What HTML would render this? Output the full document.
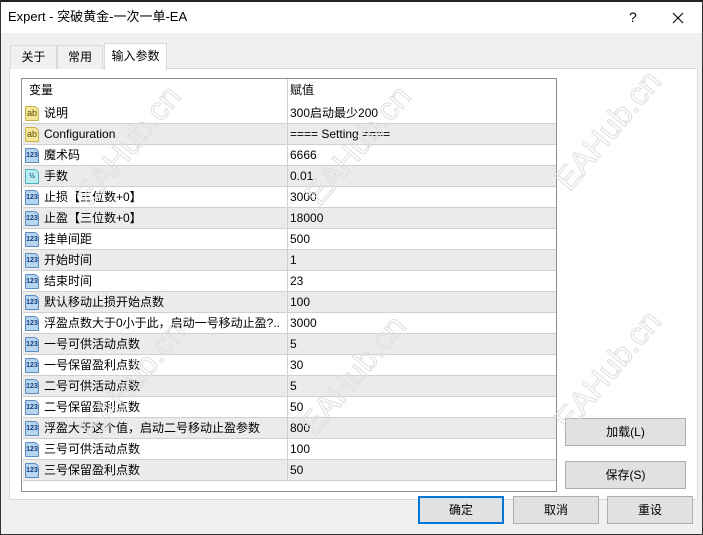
<!DOCTYPE html>
<html><head><meta charset="utf-8"><style>
*{margin:0;padding:0;box-sizing:border-box}
body{width:703px;height:535px;overflow:hidden;background:#f0f0f0;font-family:"Liberation Sans","Noto Sans CJK SC",sans-serif;font-size:12px;color:#000;position:relative}
.win{position:absolute;left:0;top:0;width:703px;height:535px;border:1px solid #333;border-top:2px solid #222;background:#f0f0f0}
.title{position:absolute;left:0;top:0;width:701px;height:31px;background:#fff}
.title .t{position:absolute;left:7px;top:6px;font-size:13px;line-height:18px}
.abs{position:absolute}
.tab{position:absolute;top:43px;height:24px;border:1px solid #d9d9d9;border-bottom:none;background:#f0f0f0;line-height:22px;text-align:center;font-size:12px}
.panel{position:absolute;left:8px;top:66px;width:689px;height:432px;background:#fff;border:1px solid #d9d9d9}
.grid{position:absolute;left:20px;top:76px;width:536px;height:414px;border:1px solid #8c8c8c;background:#fff}
.row{position:absolute;left:1px;width:533px;height:21px;border-bottom:1px solid #d0d0d0;line-height:20px}
.row.g{background:#ebebeb}
.row .n{position:absolute;left:21px;top:0;white-space:nowrap}
.row .v{position:absolute;left:267px;top:0;white-space:nowrap}
.row .d{position:absolute;left:264px;top:0;width:1px;height:21px;background:#d0d0d0}
.ic{position:absolute;left:2px;top:3px;width:14px;height:15px;border:1px solid;border-radius:1px 5px 1px 1px;font-size:7px;font-weight:bold;text-align:center;line-height:13px;font-family:"Liberation Sans",sans-serif}
.ab{background:#f4e79a;border-color:#c8b04a;color:#5a4a00;font-size:9px;font-weight:normal}
.n3{background:#b8d5f0;border-color:#5a8cc0;color:#1a3d7a}
.h{background:#b8ecf0;border-color:#4ab0c0;color:#1a5a7a}
.btn{position:absolute;height:28px;background:#e1e1e1;border:1px solid #adadad;text-align:center;line-height:26px;font-size:12px}
.wm{position:absolute;font-size:32px;font-family:"Liberation Sans",sans-serif;color:transparent;-webkit-text-stroke:1px #dedede;transform:rotate(-50deg);white-space:nowrap}
</style></head><body>
<div class="win">
<div class="title"><span class="t">Expert - 突破黄金-一次一单-EA</span>
<span class="abs" style="left:628px;top:7px;font-size:14px">?</span>
<svg class="abs" style="left:671px;top:10px" width="12" height="12"><path d="M1 1L11 11M11 1L1 11" stroke="#000" stroke-width="1.1"/></svg></div>
<div class="panel"></div>
<div class="tab" style="left:9px;width:47px">关于</div>
<div class="tab" style="left:56px;width:46px">常用</div>
<div class="tab" style="left:103px;width:63px;top:41px;height:27px;background:#fff;line-height:24px">输入参数</div>
<div class="grid">
<div class="row" style="top:0;height:24px;border-bottom:none;line-height:22px"><span class="abs" style="left:6px;top:0">变量</span><span class="abs" style="left:267px;top:0">赋值</span><div class="d" style="height:24px"></div></div>
</div>
<div class="btn" style="left:564px;top:416px;width:121px">加载(L)</div>
<div class="btn" style="left:564px;top:459px;width:121px">保存(S)</div>
<div class="btn" style="left:417px;top:494px;width:86px;border:2px solid #0078d7;line-height:24px">确定</div>
<div class="btn" style="left:512px;top:494px;width:86px">取消</div>
<div class="btn" style="left:606px;top:494px;width:86px">重设</div>
<div class="wm" style="left:55px;top:125px">EAHub.cn</div>
<div class="wm" style="left:285px;top:125px">EAHub.cn</div>
<div class="wm" style="left:535px;top:110px">EAHub.cn</div>
<div class="wm" style="left:60px;top:360px">EAHub.cn</div>
<div class="wm" style="left:280px;top:355px">EAHub.cn</div>
<div class="wm" style="left:535px;top:350px">EAHub.cn</div>
</div>
<script>
var d=[["ab","说明","300启动最少200"],["ab","Configuration","==== Setting ===="],["n3","魔术码","6666"],["h","手数","0.01"],["n3","止损【三位数+0】","3000"],["n3","止盈【三位数+0】","18000"],["n3","挂单间距","500"],["n3","开始时间","1"],["n3","结束时间","23"],["n3","默认移动止损开始点数","100"],["n3","浮盈点数大于0小于此，启动一号移动止盈?..","3000"],["n3","一号可供活动点数","5"],["n3","一号保留盈利点数","30"],["n3","二号可供活动点数","5"],["n3","二号保留盈利点数","50"],["n3","浮盈大于这个值，启动二号移动止盈参数","800"],["n3","三号可供活动点数","100"],["n3","三号保留盈利点数","50"]];
var g=document.querySelector('.grid'),h='';
d.forEach(function(r,i){var t=r[0]=='ab'?'ab':(r[0]=='h'?'½':'123');
h+='<div class="row'+(i%2?' g':'')+'" style="top:'+(24+i*21)+'px"><div class="ic '+r[0]+'">'+t+'</div><span class="n">'+r[1]+'</span><div class="d"></div><span class="v">'+r[2]+'</span></div>';});
g.insertAdjacentHTML('beforeend',h);
</script>
</body></html>
